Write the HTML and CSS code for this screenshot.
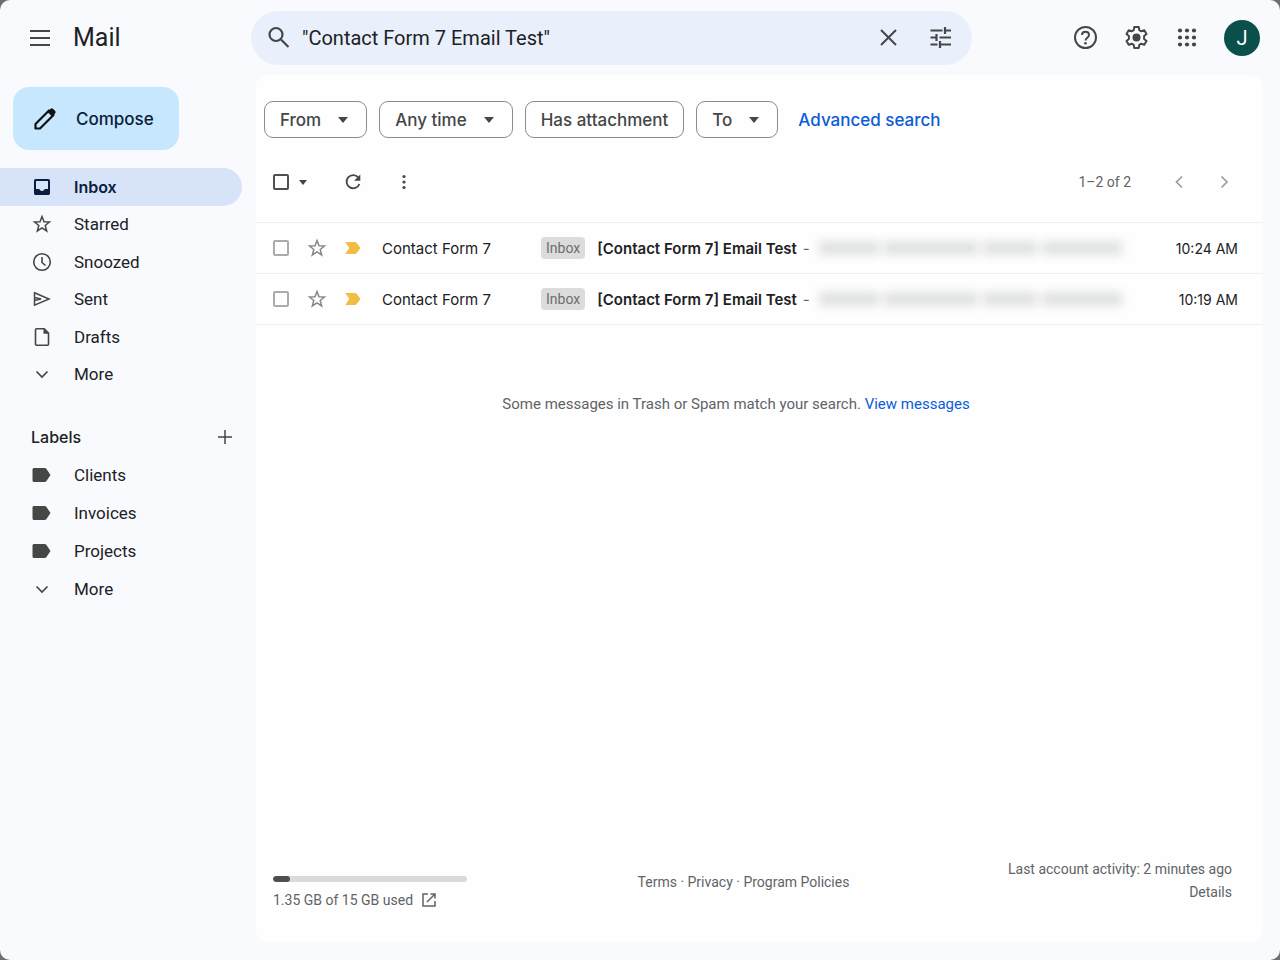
FILE: index.html
```
<!DOCTYPE html>
<html lang="en">
<head>
<meta charset="UTF-8">
<meta name="viewport" content="width=device-width, initial-scale=1">
<title>Mail</title>
<link rel="stylesheet" href="styles.css">
</head>
<body>
<header class="topbar">
<div class="brand">
<button type="button" class="icon-btn" aria-label="Main menu">
<svg width="24" height="24" viewBox="0 0 24 24"><path d="M2 5h20M2 12h20M2 19h20" fill="none" stroke="currentColor" stroke-width="1.800"/></svg>
</button>
<span class="brand-name">Mail</span>
</div>
<form class="search">
<button type="button" class="icon-btn" aria-label="Search">
<svg width="26" height="26" viewBox="0 0 26 26" fill="none" stroke="currentColor" stroke-width="2.200"><circle cx="10" cy="9.500" r="6.500"/><path d="M15 14.500l7.500 7.500"/></svg>
</button>
<input type="text" class="search-text" aria-label="Search mail" value="&quot;Contact Form 7 Email Test&quot;">
<button type="button" class="icon-btn" aria-label="Clear search">
<svg width="24" height="24" viewBox="0 0 24 24"><path d="M4 4l15 15M19 4l-15 15" fill="none" stroke="currentColor" stroke-width="2"/></svg>
</button>
<button type="button" class="icon-btn" aria-label="Search options">
<svg width="24" height="24" viewBox="0 0 24 24" fill="none" stroke="currentColor" stroke-width="2.200"><path d="M1.500 4.500h12M16 4.500h6M16 1v7M1.500 11.500h6M10.500 11.500h11.500M7.500 8v7M1.500 18.500h7M11 18.500h11M11 15v7"/></svg>
</button>
</form>
<div class="account">
<button type="button" class="icon-btn" aria-label="Support">
<svg width="26" height="26" viewBox="0 0 26 26" fill="none" stroke="currentColor" stroke-width="2"><circle cx="12.500" cy="12.500" r="10.500"/><path d="M9 10c0-4.400 7-4.400 7 0 0 2.600-3.500 2.800-3.500 5.500"/><circle cx="12.500" cy="18.300" r="1.300" fill="currentColor" stroke="none"/></svg>
</button>
<button type="button" class="icon-btn" aria-label="Settings">
<svg width="26" height="26" viewBox="0 0 26 26"><path d="M10.300 2h4.400l.6 3.100 2 1.200 3-1.100 2.200 3.800-2.400 2v3l2.400 2-2.200 3.800-3-1.100-2 1.200-.6 3.100h-4.400l-.6-3.100-2-1.200-3 1.100L2.500 16l2.400-2v-3L2.500 9l2.200-3.800 3 1.100 2-1.200z" fill="none" stroke="currentColor" stroke-width="2" stroke-linejoin="round"/><circle cx="12.500" cy="12.500" r="4" fill="currentColor"/></svg>
</button>
<button type="button" class="icon-btn" aria-label="Apps">
<svg width="24" height="24" viewBox="0 0 24 24" fill="currentColor"><circle cx="5" cy="4.500" r="2.100"/><circle cx="12" cy="4.500" r="2.100"/><circle cx="19" cy="4.500" r="2.100"/><circle cx="5" cy="11.500" r="2.100"/><circle cx="12" cy="11.500" r="2.100"/><circle cx="19" cy="11.500" r="2.100"/><circle cx="5" cy="18.500" r="2.100"/><circle cx="12" cy="18.500" r="2.100"/><circle cx="19" cy="18.500" r="2.100"/></svg>
</button>
<button type="button" class="avatar" aria-label="Account">J</button>
</div>
</header>

<div class="layout">
<aside class="sidebar">
<button type="button" class="compose">
<svg width="26" height="26" viewBox="0 0 26 26"><path d="M3.500 22.500v-4.500L17 4.500l4.500 4.500L8 22.500z" fill="none" stroke="currentColor" stroke-width="2.200" stroke-linejoin="round"/><path d="M15.500 6l3-3c.9-.9 1.800-.9 2.700 0l1.800 1.800c.9.900.9 1.800 0 2.700l-3 3z" fill="currentColor"/></svg>
Compose
</button>
<nav class="nav folders">
<a href="#" class="nav-item active"><svg width="20" height="20" viewBox="0 0 20 20"><path fill-rule="evenodd" d="M3.800 2h12.400c1 0 1.800.8 1.800 1.800v12.400c0 1-.8 1.800-1.800 1.800H3.800c-1 0-1.800-.8-1.800-1.800V3.800C2 2.800 2.800 2 3.800 2zM4 4v8h3.300c.5 1.300 1.400 2 2.700 2s2.200-.7 2.700-2H16V4z" fill="currentColor"/></svg>Inbox</a>
<a href="#" class="nav-item"><svg width="20" height="20" viewBox="0 0 20 20"><path d="M10 2.500l2 5.200 5.500.3-4.300 3.500 1.500 5.500-4.700-3.100L5.300 17l1.500-5.500L2.500 8l5.500-.3z" fill="none" stroke="currentColor" stroke-width="1.500"/></svg>Starred</a>
<a href="#" class="nav-item"><svg width="20" height="20" viewBox="0 0 20 20" fill="none" stroke="currentColor" stroke-width="1.600"><circle cx="10" cy="10" r="8.300"/><path d="M10 5v5.500l3.500 3"/></svg>Snoozed</a>
<a href="#" class="nav-item"><svg width="20" height="20" viewBox="0 0 20 20" fill="none" stroke="currentColor" stroke-width="1.500"><path d="M2.500 3.800L17 10 2.500 16.200V3.800zM2.500 8.500L9 10l-6.500 1.500"/></svg>Sent</a>
<a href="#" class="nav-item"><svg width="20" height="20" viewBox="0 0 20 20"><path d="M4.500 1.800h7.700l4.300 4.300v11.100c0 .6-.4 1-1 1h-11c-.6 0-1-.4-1-1V2.800c0-.6.4-1 1-1z" fill="none" stroke="currentColor" stroke-width="1.600"/><path d="M11.500 1.500v5.300h5.300z" fill="currentColor"/></svg>Drafts</a>
<a href="#" class="nav-item"><svg width="20" height="20" viewBox="0 0 20 20"><path d="M4.500 7.500L10 13l5.500-5.500" fill="none" stroke="currentColor" stroke-width="1.700"/></svg>More</a>
</nav>
<div class="labels-head">
<h2>Labels</h2>
<button type="button" class="icon-btn" aria-label="Create new label">
<svg width="20" height="20" viewBox="0 0 20 20"><path d="M10 3v14M3 10h14" fill="none" stroke="currentColor" stroke-width="1.500"/></svg>
</button>
</div>
<nav class="nav labels">
<a href="#" class="nav-item"><svg width="20" height="20" viewBox="0 0 20 20"><path d="M2 3h10.700c.7 0 1.200.3 1.600.8L18.500 10l-4.200 6.200c-.4.500-.9.800-1.600.8H2c-.8 0-1.500-.7-1.500-1.500v-11C.5 3.700 1.200 3 2 3z" fill="currentColor"/></svg>Clients</a>
<a href="#" class="nav-item"><svg width="20" height="20" viewBox="0 0 20 20"><path d="M2 3h10.700c.7 0 1.200.3 1.600.8L18.500 10l-4.200 6.200c-.4.500-.9.800-1.600.8H2c-.8 0-1.500-.7-1.500-1.500v-11C.5 3.700 1.200 3 2 3z" fill="currentColor"/></svg>Invoices</a>
<a href="#" class="nav-item"><svg width="20" height="20" viewBox="0 0 20 20"><path d="M2 3h10.700c.7 0 1.200.3 1.600.8L18.500 10l-4.200 6.200c-.4.500-.9.800-1.600.8H2c-.8 0-1.500-.7-1.500-1.500v-11C.5 3.700 1.200 3 2 3z" fill="currentColor"/></svg>Projects</a>
<a href="#" class="nav-item"><svg width="20" height="20" viewBox="0 0 20 20"><path d="M4.500 7.500L10 13l5.500-5.500" fill="none" stroke="currentColor" stroke-width="1.700"/></svg>More</a>
</nav>
</aside>

<main class="panel">
<div class="filters">
<button type="button" class="chip">From<span class="caret"></span></button>
<button type="button" class="chip">Any time<span class="caret"></span></button>
<button type="button" class="chip">Has attachment</button>
<button type="button" class="chip">To<span class="caret"></span></button>
<a href="#" class="advanced">Advanced search</a>
</div>

<div class="toolbar">
<input type="checkbox" class="check dark" aria-label="Select all">
<button type="button" class="icon-btn select-more" aria-label="Select options"><span class="caret small"></span></button>
<button type="button" class="icon-btn refresh" aria-label="Refresh">
<svg width="20" height="20" viewBox="0 0 20 20"><path d="M15.300 5.500A6.600 6.600 0 1 0 16.400 12" fill="none" stroke="currentColor" stroke-width="1.800"/><path d="M17.300 2.500v6.200h-6.200z" fill="currentColor"/></svg>
</button>
<button type="button" class="icon-btn" aria-label="More actions">
<svg width="20" height="20" viewBox="0 0 20 20" fill="currentColor"><circle cx="10" cy="4.500" r="1.600"/><circle cx="10" cy="10" r="1.600"/><circle cx="10" cy="15.500" r="1.600"/></svg>
</button>
<span class="count">1–2 of 2</span>
<button type="button" class="icon-btn pager" aria-label="Newer">
<svg width="20" height="20" viewBox="0 0 20 20"><path d="M13 4.500L7.500 10l5.500 5.500" fill="none" stroke="currentColor" stroke-width="1.700"/></svg>
</button>
<button type="button" class="icon-btn pager" aria-label="Older">
<svg width="20" height="20" viewBox="0 0 20 20"><path d="M7.500 4.500L13 10l-5.500 5.500" fill="none" stroke="currentColor" stroke-width="1.700"/></svg>
</button>
</div>

<table class="mails">
<colgroup>
<col class="col-check">
<col class="col-star">
<col class="col-mark">
<col class="col-from">
<col>
<col class="col-time">
</colgroup>
<tbody>
<tr>
<td><input type="checkbox" class="check" aria-label="Select message"></td>
<td><button type="button" class="icon-btn star" aria-label="Star"><svg width="20" height="20" viewBox="0 0 20 20"><path d="M10 2.500l2 5.200 5.500.3-4.300 3.500 1.500 5.500-4.700-3.100L5.300 17l1.500-5.500L2.500 8l5.500-.3z" fill="none" stroke="currentColor" stroke-width="1.500"/></svg></button></td>
<td><svg class="mark" width="16" height="12" viewBox="0 0 16 12"><path d="M.3 0h9.500c.8 0 1.300.2 1.700.8L15.500 6l-4 5.200c-.4.600-.9.800-1.700.8H.3L4.300 6z" fill="currentColor"/></svg></td>
<td class="from">Contact Form 7</td>
<td><div class="subject"><span class="tag">Inbox</span><b>[Contact Form 7] Email Test</b><span class="dash">-</span><span class="snippet"><i class="w1"></i><i class="w2"></i><i class="w3"></i><i class="w4"></i></span></div></td>
<td class="time">10:24 AM</td>
</tr>
<tr>
<td><input type="checkbox" class="check" aria-label="Select message"></td>
<td><button type="button" class="icon-btn star" aria-label="Star"><svg width="20" height="20" viewBox="0 0 20 20"><path d="M10 2.500l2 5.200 5.500.3-4.300 3.500 1.500 5.500-4.700-3.100L5.300 17l1.500-5.500L2.500 8l5.500-.3z" fill="none" stroke="currentColor" stroke-width="1.500"/></svg></button></td>
<td><svg class="mark" width="16" height="12" viewBox="0 0 16 12"><path d="M.3 0h9.500c.8 0 1.300.2 1.700.8L15.500 6l-4 5.200c-.4.600-.9.800-1.700.8H.3L4.300 6z" fill="currentColor"/></svg></td>
<td class="from">Contact Form 7</td>
<td><div class="subject"><span class="tag">Inbox</span><b>[Contact Form 7] Email Test</b><span class="dash">-</span><span class="snippet"><i class="w1"></i><i class="w2"></i><i class="w3"></i><i class="w4"></i></span></div></td>
<td class="time">10:19 AM</td>
</tr>
</tbody>
</table>

<p class="notice">Some messages in Trash or Spam match your search. <a href="#">View messages</a></p>

<footer class="footer">
<div class="storage">
<div class="bar"><div class="bar-fill" style="width: 9%"></div></div>
<a href="#">1.35 GB of 15 GB used <svg width="16" height="16" viewBox="0 0 16 16" fill="none" stroke="currentColor" stroke-width="1.500"><path d="M7 2H2v12h12V9M9.500 2H14v4.500M14 2L6 10"/></svg></a>
</div>
<div class="legal"><a href="#">Terms</a> · <a href="#">Privacy</a> · <a href="#">Program Policies</a></div>
<div class="activity">Last account activity: 2 minutes ago<br><a href="#">Details</a></div>
</footer>
</main>
</div>
</body>
</html>
```

FILE: styles.css
```
* { box-sizing: border-box; }
html { background: #6e6f70; }
body { margin: 0; min-height: 100vh; display: flex; flex-direction: column; border-radius: 10px; background: #f9fafd; color: #202124; font-family: Roboto, "Liberation Sans", sans-serif; font-size: 17px; }
button, input { font-family: inherit; font-size: inherit; color: inherit; }
a { color: inherit; text-decoration: none; }
svg { display: block; flex: none; }
button { cursor: pointer; }
.icon-btn { display: flex; align-items: center; justify-content: center; padding: 0; border: none; background: none; color: #444746; }

/* top bar */
.topbar { display: flex; align-items: center; height: 75px; padding-right: 20px; }
.brand { display: flex; align-items: center; gap: 21px; flex: 0 0 251px; padding-left: 28px; }
.brand-name { font-size: 25px; }
.search { display: flex; align-items: center; flex: 0 1 721px; height: 54px; padding: 0 19px 0 15px; border-radius: 27px; background: #e9f0fb; }
.search-text { flex: 1; min-width: 0; margin-left: 10px; padding: 0; border: none; outline: none; background: none; font-size: 20px; }
.search .icon-btn + .icon-btn { margin-left: 28px; }
.account { display: flex; align-items: center; gap: 25px; margin-left: auto; }
.avatar { width: 36px; height: 36px; padding: 0; border: none; border-radius: 50%; background: #0b4f4a; color: #fff; font-size: 20px; }

.layout { display: flex; flex: 1; padding: 0 18px 18px 0; }

/* sidebar */
.sidebar { flex: 0 0 256px; padding: 12px 14px 0 0; }
.compose { display: flex; align-items: center; gap: 18px; height: 63px; margin: 0 0 18px 13px; padding: 0 25px 0 19px; border: none; border-radius: 16px; background: #c6e7fd; color: #0b2038; font-family: Inter, sans-serif; font-size: 17px; font-weight: 500; }
.compose svg { color: #111; }
.nav { display: grid; grid-auto-rows: 1fr; }
.folders { height: 225px; }
.labels { height: 152px; }
.nav-item { display: flex; align-items: center; gap: 22px; padding-left: 32px; }
.nav-item svg { color: #444746; }
.nav-item.active { border-radius: 0 19px 19px 0; background: #d7e3f9; color: #0a1d3c; font-family: Inter, sans-serif; font-size: 16px; font-weight: 600; }
.nav-item.active svg { color: #0a1d3c; }
.labels-head { display: flex; align-items: center; justify-content: space-between; height: 38px; margin-top: 25px; padding: 0 7px 0 31px; }
.labels-head h2 { margin: 0; font-family: Inter, sans-serif; font-size: 16px; font-weight: 500; }

/* results */
.panel { display: flex; flex-direction: column; flex: 1; min-width: 0; border-radius: 12px; background: #fefefe; }
.filters { display: flex; align-items: center; gap: 12px; padding: 26px 8px 0; font-family: Inter, sans-serif; font-size: 17px; font-weight: 500; }
.chip { display: flex; align-items: center; height: 37px; padding: 0 15px; border: 1px solid #8a8c8e; border-radius: 9px; background: none; color: #444746; font-weight: inherit; }
.caret { margin: 0 3px 0 17px; border: 5px solid transparent; border-top: 6px solid #444746; border-bottom: 0; }
.caret.small { margin: 0; border-width: 5px 4px 0; }
.advanced { margin-left: 8px; color: #0b5cd5; }
.toolbar { display: flex; align-items: center; height: 84px; padding: 4px 28px 0 17px; }
.check { appearance: none; display: block; width: 16px; height: 16px; margin: 0; border: 2px solid #a9abac; border-radius: 2px; }
.check.dark { border-color: #4e5052; }
.select-more { margin-left: 10px; }
.refresh { margin: 0 31px 0 36px; }
.count { margin-left: auto; margin-right: 38px; color: #5f6368; font-size: 14px; }
.pager { color: #9a9c9e; }
.pager + .pager { margin-left: 25px; }

.mails { width: 100%; border-collapse: collapse; table-layout: fixed; border-top: 1px solid #eeeff0; font-family: Inter, sans-serif; font-size: 15px; }
.mails tr { height: 51px; border-bottom: 1px solid #eeeff0; }
.mails td { padding: 0; }
.mails td:first-child { padding-left: 17px; }
.col-check { width: 51px; }
.col-star { width: 38px; }
.col-mark { width: 37px; }
.col-from { width: 159px; }
.col-time { width: 110px; }
.star { color: #85888a; }
.mark { color: #f2bd42; }
.subject { display: flex; align-items: center; white-space: nowrap; }
.subject b { font-weight: 600; }
.tag { margin-right: 12px; padding: 0 5px; border-radius: 4px; background: #dcdcdc; color: #6b6d6f; font-family: Roboto, sans-serif; font-size: 14px; line-height: 22px; }
.dash { margin: 0 9px 0 6px; color: #5f6368; }
.snippet { display: flex; align-items: center; gap: 5px; height: 14px; filter: blur(5px); }
.snippet i { height: 14px; background: #e0e1e1; }
.w1 { width: 60px; }
.w2 { width: 94px; }
.w3 { width: 54px; }
.w4 { width: 80px; }
.mails .time { padding-right: 24px; text-align: right; font-size: 14px; }

.notice { margin: 69px 0 0; padding-right: 46px; text-align: center; color: #5f6368; font-size: 15px; line-height: 20px; }
.notice a { color: #0b5cd5; }

/* footer */
.footer { display: grid; grid-template-columns: 1fr auto 1fr; align-items: start; margin-top: auto; padding: 0 30px 34px 17px; color: #5f6368; font-size: 14px; }
.storage { padding-top: 18px; }
.bar { width: 194px; height: 6px; margin-bottom: 10px; border-radius: 3px; background: #dadada; overflow: hidden; }
.bar-fill { height: 100%; border-radius: 3px; background: #4d4f50; }
.storage a { display: flex; align-items: center; gap: 8px; }
.legal { margin-right: 18px; padding-top: 16px; }
.activity { text-align: right; line-height: 23px; }
```
